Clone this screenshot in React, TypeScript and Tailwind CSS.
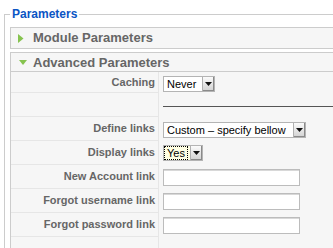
import React from "react";

function Arrow() {
  return (
    <div className="w-[12px] h-full border-l border-[#b0b0b0] bg-gradient-to-b from-[#fbfbfb] to-[#d2d2d2] shadow-[inset_-1px_-1px_0_#8a8a8a] flex items-center justify-center">
      <svg width="7" height="4" viewBox="0 0 7 4">
        <polygon points="0,0 7,0 3.5,4" fill="#111" />
      </svg>
    </div>
  );
}

function Select({ value, cls, focus }: { value: string; cls: string; focus?: boolean }) {
  return (
    <div className={`flex h-[16px] border border-[#b4b4b4] ${focus ? "bg-[#ffffe3]" : "bg-white"} ${cls}`}>
      {focus ? (
        <div className="flex-1 flex items-center border border-dotted border-black mr-[2px]">
          <span className="pl-[2px] text-[11px] leading-[12px] text-black">{value}</span>
        </div>
      ) : (
        <div className="flex-1 flex items-center">
          <span className="pl-[3px] text-[11px] leading-[12px] text-black">{value}</span>
        </div>
      )}
      <Arrow />
    </div>
  );
}

function TextInput() {
  return (
    <input
      type="text"
      className="block w-[137px] h-[17px] bg-white border border-[#bcbcbc] shadow-[inset_0_1px_0_#d8d8d8] outline-none"
    />
  );
}

function Row({
  label,
  children,
  cls,
}: {
  label: string;
  children?: React.ReactNode;
  cls: string;
}) {
  return (
    <div className={`flex ${cls}`}>
      <div className="w-[148px] shrink-0 border-r border-b border-[#e6e6e6] flex items-center justify-end pr-[3px] text-[11px] font-bold text-[#666] leading-[13px]">
        {label}
      </div>
      <div className="flex-1 pl-[4px] pt-[4px]">{children}</div>
    </div>
  );
}

export default function App() {
  return (
    <div className="w-[333px] h-[248px] overflow-hidden bg-white font-['Liberation_Sans',Arial,sans-serif]">
      <fieldset className="ml-[4px] mt-[7px] w-[400px] border border-[#ccc] pl-[5px] pt-[6px] pb-[10px]">
        <legend className="px-[2px] text-[12px] leading-[14px] font-bold text-[#0B55C4]">
          Parameters
        </legend>

        <div className="border border-[#ccc]">
          <div className="h-[20px] bg-[#f6f6f6] flex items-center pl-[7px]">
            <svg width="10" height="9" viewBox="0 0 10 9" className="shrink-0">
              <polygon points="0,0 5.5,4.5 0,9" fill="#86c34f" />
            </svg>
            <span className="ml-[5px] text-[13px] leading-[20px] font-bold text-[#666]">
              Module Parameters
            </span>
          </div>
        </div>

        <div className="mt-[3px] border border-[#ccc] bg-[#f6f6f6]">
          <div className="h-[19px] flex items-center pl-[7px] border-b border-[#ccc]">
            <svg width="10" height="9" viewBox="0 0 10 9" className="shrink-0">
              <polygon points="1,2 9,2 5,7" fill="#86c34f" />
            </svg>
            <span className="ml-[5px] text-[13px] leading-[19px] font-bold text-[#666]">
              Advanced Parameters
            </span>
          </div>

          <div className="flex flex-col">
            <Row label="Caching" cls="h-[21px]">
              <Select value="Never" cls="w-[52px]" />
            </Row>
            <Row label="" cls="h-[24px]">
              <div className="mt-[9px] h-[2px] border-t border-[#555] border-b-[#fff]" />
            </Row>
            <Row label="Define links" cls="h-[24px]">
              <div className="pt-[1px]">
                <Select value="Custom – specify bellow" cls="w-[143px]" />
              </div>
            </Row>
            <Row label="Display links" cls="h-[24px]">
              <Select value="Yes" cls="w-[40px]" focus />
            </Row>
            <Row label="New Account link" cls="h-[24px]">
              <TextInput />
            </Row>
            <Row label="Forgot username link" cls="h-[24px]">
              <TextInput />
            </Row>
            <Row label="Forgot password link" cls="h-[24px]">
              <TextInput />
            </Row>
            <Row label="" cls="h-[24px]" />
          </div>
        </div>
      </fieldset>
    </div>
  );
}
